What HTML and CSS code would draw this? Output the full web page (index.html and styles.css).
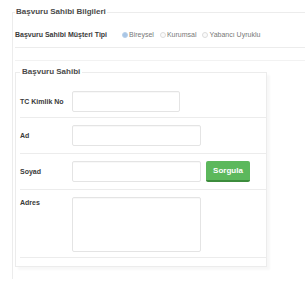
FILE: index.html
```html
<!DOCTYPE html>
<html lang="tr">
<head>
	<meta charset="UTF-8">
	<meta name="viewport" content="width=device-width, initial-scale=1.0">
	<title>Başvuru Sahibi Bilgileri</title>
	<link rel="stylesheet" href="styles.css">
</head>
<body>
	<fieldset class="group">
		<legend>Başvuru Sahibi Bilgileri</legend>

		<div class="type-row">
			<span class="type-label">Başvuru Sahibi Müşteri Tipi</span>
			<div class="radios">
				<label class="radio"><span class="dot checked"></span>Bireysel</label>
				<label class="radio"><span class="dot"></span>Kurumsal</label>
				<label class="radio"><span class="dot"></span>Yabancı Uyruklu</label>
			</div>
		</div>
		<div class="spacer"></div>

		<fieldset class="owner">
			<legend>Başvuru Sahibi</legend>

			<div class="row first">
				<label class="label">TC Kimlik No</label>
				<input type="text" class="input short">
			</div>
			<div class="row">
				<label class="label">Ad</label>
				<input type="text" class="input">
			</div>
			<div class="row">
				<label class="label">Soyad</label>
				<input type="text" class="input">
				<button class="btn-query">Sorgula</button>
			</div>
			<div class="row top">
				<label class="label">Adres</label>
				<textarea class="input area"></textarea>
			</div>
		</fieldset>
	</fieldset>
</body>
</html>
```

FILE: styles.css
```css
html, body {
	margin: 0;
	background-color: #fff;
	overflow: hidden;
}

body {
	padding: 7px 0 0 12px;
	font-family: "Liberation Sans", Arial, sans-serif;
	color: #3a3a3a;
}

fieldset {
	margin: 0;
	min-width: 0;
}

legend {
	font-size: 8px;
	line-height: 10px;
	font-weight: bold;
	color: #4a4a4a;
}

.group {
	border: none;
	border-top: 1px solid #ececec;
	border-left: 1px solid #ececec;
	padding: 0 0 12px 2px;
}

.group > legend {
	padding: 0 1px;
}

.type-row {
	display: flex;
	align-items: center;
	padding: 13px 0 7px 0;
	border-bottom: 1px solid #ececec;
	font-size: 7px;
	line-height: 10px;
}

.type-label {
	font-weight: bold;
	width: 107px;
}

.radios {
	display: flex;
	gap: 6px;
	color: #777;
}

.radio {
	display: flex;
	align-items: center;
	gap: 1px;
}

.dot {
	width: 4px;
	height: 4px;
	border-radius: 50%;
	border: 1px solid #dcdcdc;
	background-color: #fafafa;
}

.dot.checked {
	background-color: #a9c6e6;
	border-color: #b9d1ea;
}

.spacer {
	height: 12px;
	border-bottom: 1px solid #f2f2f2;
	margin-bottom: 6px;
}

.owner {
	width: 246px;
	border: 1px solid #ececec;
	padding: 0 0 8px 4px;
	box-shadow: 3px 3px 2px rgba(0, 0, 0, 0.03);
}

.owner > legend {
	padding: 0 2px;
}

.row {
	display: flex;
	align-items: center;
	gap: 5px;
	padding: 7px 0;
	border-bottom: 1px solid #ececec;
}

.row.first {
	padding-top: 14px;
	padding-bottom: 5px;
}

.row.top {
	align-items: flex-start;
	padding-bottom: 5px;
}

.label {
	width: 47px;
	font-size: 7px;
	line-height: 10px;
	font-weight: bold;
	color: #3a3a3a;
}

.row.top .label {
	padding-top: 1px;
}

.input {
	box-sizing: border-box;
	width: 129px;
	height: 21px;
	margin: 0;
	padding: 2px 4px;
	border: 1px solid #e4e4e4;
	border-radius: 2px;
	background-color: #fff;
	box-shadow: inset 0 1px 1px rgba(0, 0, 0, 0.03);
	font-family: "Liberation Sans", Arial, sans-serif;
	font-size: 8px;
}

.input.short {
	width: 108px;
}

.input.area {
	height: 55px;
	resize: none;
}

.btn-query {
	box-sizing: border-box;
	width: 44px;
	height: 21px;
	padding: 0;
	border: none;
	border-bottom: 2px solid #3c8c3c;
	border-radius: 2px;
	background-color: #5cb85c;
	color: #fff;
	font-family: "Liberation Sans", Arial, sans-serif;
	font-size: 8px;
	font-weight: bold;
	cursor: pointer;
}
```
